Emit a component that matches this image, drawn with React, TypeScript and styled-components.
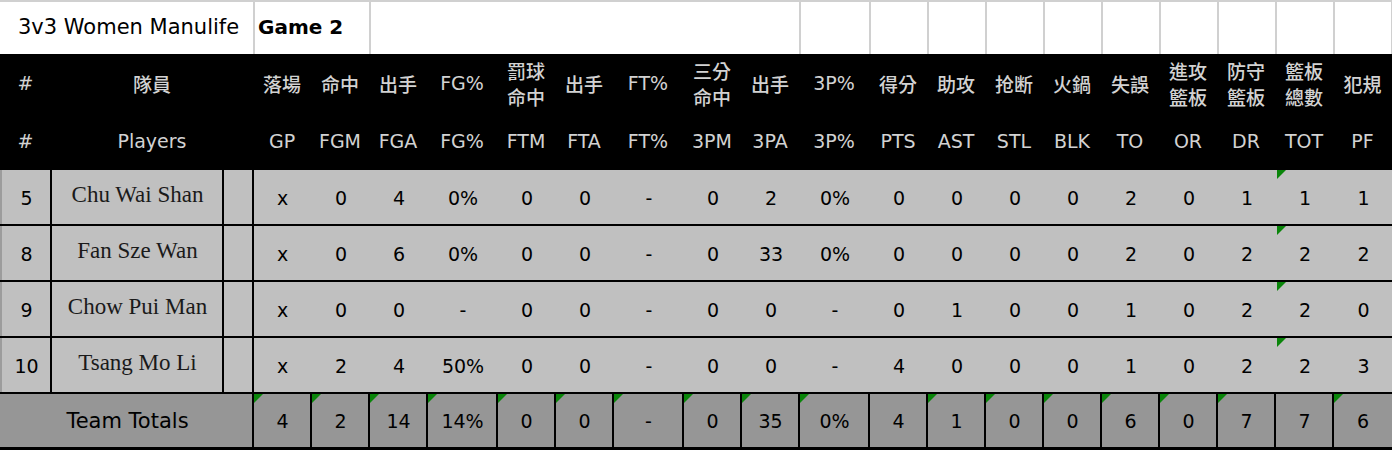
import styled, { createGlobalStyle } from "styled-components";

const GlobalStyle = createGlobalStyle`
    body {
        margin: 0;
        background: #ffffff;
        font-family: "DejaVu Sans", Verdana, sans-serif;
    }
`;

const COLUMNS =
    "51px 172px 30px 58px 58px 58px 70px 58px 58px 70px 58px 58px 70px 58px repeat(7, 58px) 59px";

const Sheet = styled.div`
    width: 1392px;
    display: flex;
    flex-direction: column;
`;

const TitleRow = styled.div`
    display: grid;
    grid-template-columns: ${COLUMNS};
    height: 54px;
    box-sizing: border-box;
    border-top: 2px solid #d0d0d0;
    background: #ffffff;
`;

const TitleCell = styled.div<{ $span?: number; $bold?: boolean; $line?: boolean; $end?: boolean }>`
    grid-column: span ${(p) => p.$span ?? 1};
    display: flex;
    align-items: center;
    box-sizing: border-box;
    padding-left: ${(p) => (p.$bold ? "3px" : "16px")};
    padding-bottom: 2px;
    border-left: 2px solid ${(p) => (p.$line ? "#d0d0d0" : "transparent")};
    border-right: ${(p) => (p.$end ? "1px solid #d0d0d0" : "none")};
    font-size: ${(p) => (p.$bold ? "20px" : "21px")};
    font-weight: ${(p) => (p.$bold ? 700 : 400)};
    color: #000;
    white-space: nowrap;
`;

const HeadBlock = styled.div`
    display: grid;
    grid-template-columns: ${COLUMNS};
    grid-template-rows: 58px 58px;
    background: #000000;
`;

const HeadCell = styled.div<{ $span?: number; $cjk?: boolean }>`
    grid-column: span ${(p) => p.$span ?? 1};
    display: flex;
    flex-direction: column;
    align-items: center;
    justify-content: center;
    color: #d2d2d2;
    font-family: ${(p) =>
        p.$cjk
            ? '"Noto Sans CJK TC", "Noto Sans CJK SC", sans-serif'
            : '"DejaVu Sans", Verdana, sans-serif'};
    font-size: 19px;
    font-weight: ${(p) => (p.$cjk ? 500 : 400)};
    line-height: 26px;
    padding-top: ${(p) => (p.$cjk ? "2px" : "0")};
    white-space: nowrap;
`;

const DataRow = styled.div<{ $total?: boolean }>`
    display: grid;
    grid-template-columns: ${COLUMNS};
    height: 56px;
    box-sizing: border-box;
    border-bottom: ${(p) => (p.$total ? "3px" : "2px")} solid #000;
    background: ${(p) => (p.$total ? "#969696" : "#c0c0c0")};
`;

const Cell = styled.div<{
    $span?: number;
    $rule?: "dark" | "soft" | "none";
    $serif?: boolean;
    $flag?: boolean;
    $big?: boolean;
}>`
    position: relative;
    grid-column: span ${(p) => p.$span ?? 1};
    display: flex;
    align-items: center;
    justify-content: center;
    box-sizing: border-box;
    margin-left: ${(p) => (p.$rule === "dark" ? "-1px" : "0")};
    border-left: 2px solid
        ${(p) => (p.$rule === "dark" ? "#000" : p.$rule === "soft" ? "#9c9c9c" : "transparent")};
    font-family: ${(p) =>
        p.$serif ? '"Liberation Serif", "Times New Roman", serif' : '"DejaVu Sans", Verdana, sans-serif'};
    font-size: ${(p) => (p.$serif ? "23px" : p.$big ? "21px" : "19px")};
    color: ${(p) => (p.$serif ? "#1a1a1a" : "#000")};
    padding-top: ${(p) => (p.$serif ? "0" : "1px")};
    padding-bottom: ${(p) => (p.$serif ? "5px" : "0")};
    white-space: nowrap;

    &::before {
        content: "";
        display: ${(p) => (p.$flag ? "block" : "none")};
        position: absolute;
        top: 0;
        left: 0;
        width: 0;
        height: 0;
        border-top: 9px solid #0a850a;
        border-right: 9px solid transparent;
    }
`;

type Head = { zh: string[]; en: string; span?: number; zhLatin?: boolean };

const heads: Head[] = [
    { zh: ["#"], en: "#", zhLatin: true },
    { zh: ["隊員"], en: "Players", span: 2 },
    { zh: ["落場"], en: "GP" },
    { zh: ["命中"], en: "FGM" },
    { zh: ["出手"], en: "FGA" },
    { zh: ["FG%"], en: "FG%", zhLatin: true },
    { zh: ["罰球", "命中"], en: "FTM" },
    { zh: ["出手"], en: "FTA" },
    { zh: ["FT%"], en: "FT%", zhLatin: true },
    { zh: ["三分", "命中"], en: "3PM" },
    { zh: ["出手"], en: "3PA" },
    { zh: ["3P%"], en: "3P%", zhLatin: true },
    { zh: ["得分"], en: "PTS" },
    { zh: ["助攻"], en: "AST" },
    { zh: ["抢断"], en: "STL" },
    { zh: ["火鍋"], en: "BLK" },
    { zh: ["失誤"], en: "TO" },
    { zh: ["進攻", "籃板"], en: "OR" },
    { zh: ["防守", "籃板"], en: "DR" },
    { zh: ["籃板", "總數"], en: "TOT" },
    { zh: ["犯規"], en: "PF" },
];

const players = [
    { no: "5", name: "Chu Wai Shan", stats: ["x", "0", "4", "0%", "0", "0", "-", "0", "2", "0%", "0", "0", "0", "0", "2", "0", "1", "1", "1"] },
    { no: "8", name: "Fan Sze Wan", stats: ["x", "0", "6", "0%", "0", "0", "-", "0", "33", "0%", "0", "0", "0", "0", "2", "0", "2", "2", "2"] },
    { no: "9", name: "Chow Pui Man", stats: ["x", "0", "0", "-", "0", "0", "-", "0", "0", "-", "0", "1", "0", "0", "1", "0", "2", "2", "0"] },
    { no: "10", name: "Tsang Mo Li", stats: ["x", "2", "4", "50%", "0", "0", "-", "0", "0", "-", "4", "0", "0", "0", "1", "0", "2", "2", "3"] },
];

const totals = ["4", "2", "14", "14%", "0", "0", "-", "0", "35", "0%", "4", "1", "0", "0", "6", "0", "7", "7", "6"];

// stat index 17 is TOT, 10 is PTS
const TOT = 17;
const PTS = 10;

const App = () => {
    return (
        <Sheet>
            <GlobalStyle />
            <TitleRow>
                <TitleCell $span={3}>3v3 Women Manulife</TitleCell>
                <TitleCell $span={2} $bold $line>
                    Game 2
                </TitleCell>
                <TitleCell $span={7} $line />
                {Array.from({ length: 10 }).map((_, i) => (
                    <TitleCell key={i} $line $end={i === 9} />
                ))}
            </TitleRow>

            <HeadBlock>
                {heads.map((h, i) => (
                    <HeadCell key={"zh" + i} $span={h.span} $cjk={!h.zhLatin}>
                        {h.zh.map((line) => (
                            <span key={line}>{line}</span>
                        ))}
                    </HeadCell>
                ))}
                {heads.map((h, i) => (
                    <HeadCell key={"en" + i} $span={h.span}>
                        {h.en}
                    </HeadCell>
                ))}
            </HeadBlock>

            {players.map((p) => (
                <DataRow key={p.no}>
                    <Cell $rule="soft">{p.no}</Cell>
                    <Cell $rule="dark" $serif>
                        {p.name}
                    </Cell>
                    <Cell $rule="dark" />
                    {p.stats.map((s, i) => (
                        <Cell key={i} $rule={i === 0 ? "dark" : "none"} $flag={i === TOT}>
                            {s}
                        </Cell>
                    ))}
                </DataRow>
            ))}

            <DataRow $total>
                <Cell $span={3} $big>
                    Team Totals
                </Cell>
                {totals.map((s, i) => (
                    <Cell key={i} $rule="dark" $flag={i !== TOT && i !== PTS}>
                        {s}
                    </Cell>
                ))}
            </DataRow>
        </Sheet>
    );
};

export default App;
